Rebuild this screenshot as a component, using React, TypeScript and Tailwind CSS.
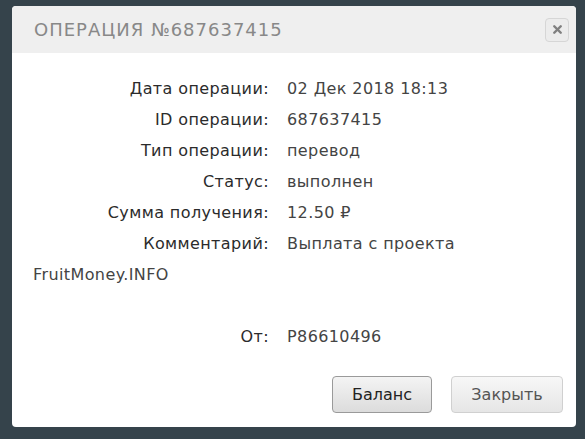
import React from "react";
import { X } from "lucide-react";

const rows = [
  { label: "Дата операции:", value: "02 Дек 2018 18:13" },
  { label: "ID операции:", value: "687637415" },
  { label: "Тип операции:", value: "перевод" },
  { label: "Статус:", value: "выполнен" },
  { label: "Сумма получения:", value: "12.50 ₽" },
  { label: "Комментарий:", value: "Выплата с проекта" },
];

const Row = ({ label, value }: { label: string; value: string }) => (
  <div className="h-[31px] leading-[31px] flex">
    <span className="w-[236px] text-right text-[#2b2b2b]">{label}</span>
    <span className="ml-[18px] text-[#444]">{value}</span>
  </div>
);

const App = () => {
  return (
    <div className="w-[585px] h-[439px] bg-[#35434b] pt-[6px] pl-[12px] overflow-hidden">
      <div className="w-[564px] h-[421px] bg-white rounded-[4px] overflow-hidden flex flex-col font-['DejaVu_Sans',sans-serif]">
        <div className="h-[47px] bg-[#efefef] flex items-center justify-between pl-[22px] pr-[7px]">
          <h1 className="text-[18px] tracking-[1px] text-[#888] uppercase">Операция №687637415</h1>
          <button className="w-[24px] h-[24px] rounded-[4px] border border-[#d6d6d6] bg-[#ececec] flex items-center justify-center text-[#808080]">
            <X className="w-[13px] h-[13px]" strokeWidth={4.5} />
          </button>
        </div>

        <div className="flex-1 pt-[20px] pl-[21px] pr-[20px] text-[16px] tracking-[0.4px]">
          {rows.map((r) => (
            <Row key={r.label} label={r.label} value={r.value} />
          ))}
          <div className="h-[31px] leading-[31px] text-[#444]">FruitMoney.INFO</div>
          <div className="mt-[31px]">
            <Row label="От:" value="P86610496" />
          </div>
        </div>

        <div className="flex justify-end gap-[19px] pr-[13px] pb-[14px] text-[16px]">
          <button className="w-[100px] h-[37px] rounded-[4px] border border-[#9a9a9a] bg-gradient-to-b from-[#f4f4f4] to-[#dcdcdc] text-[#222]">
            Баланс
          </button>
          <button className="w-[112px] h-[37px] rounded-[4px] border border-[#d0d0d0] bg-gradient-to-b from-[#f7f7f7] to-[#e6e6e6] text-[#555]">
            Закрыть
          </button>
        </div>
      </div>
    </div>
  );
};

export default App;
